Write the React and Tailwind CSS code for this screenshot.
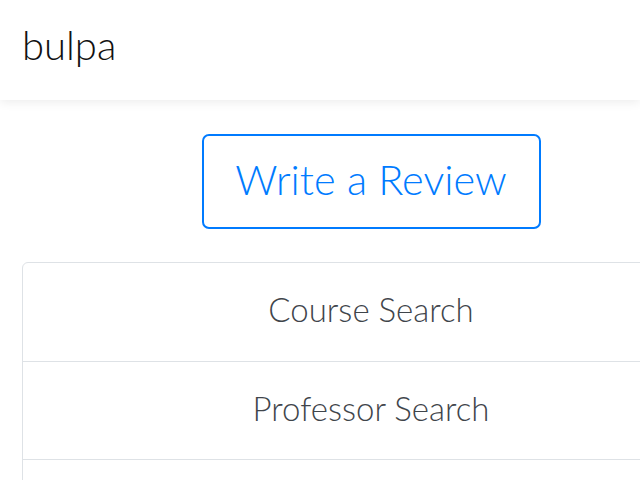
import React from 'react'

function App() {
    const items = ["Course Search", "Professor Search", ""]
    return (
        <div className="w-[640px] h-[480px] overflow-hidden bg-white" style={{ fontFamily: "Lato, 'Open Sans', sans-serif" }}>
            <div className="h-[100px] flex items-center pl-[22px] bg-white shadow-[0_2px_10px_rgba(0,0,0,0.08)] relative z-10">
                <h1 className="text-[40px] font-light text-[#111] leading-none pb-[10px]">bulpa</h1>
            </div>
            <div className="pl-[22px] pt-[34px]">
                <div className="w-[698px]">
                    <div className="flex justify-center">
                        <button className="w-[339px] h-[95px] border-[2px] border-[#007bff] rounded-[7px] text-[#007bff] text-[41.5px] font-light leading-none pb-[4px]">
                            Write a Review
                        </button>
                    </div>
                    <div className="mt-[33px] border border-[#dee2e6] rounded-t-[6px]">
                        {items.map((item, idx) => (
                            <div
                                key={idx}
                                className={"h-[98px] flex items-center justify-center text-[33px] font-light text-[#3f454b] pb-[4px] " + (idx > 0 ? "border-t border-[#dee2e6]" : "")}
                            >
                                {item}
                            </div>
                        ))}
                    </div>
                </div>
            </div>
        </div>
    )
}

export default App
